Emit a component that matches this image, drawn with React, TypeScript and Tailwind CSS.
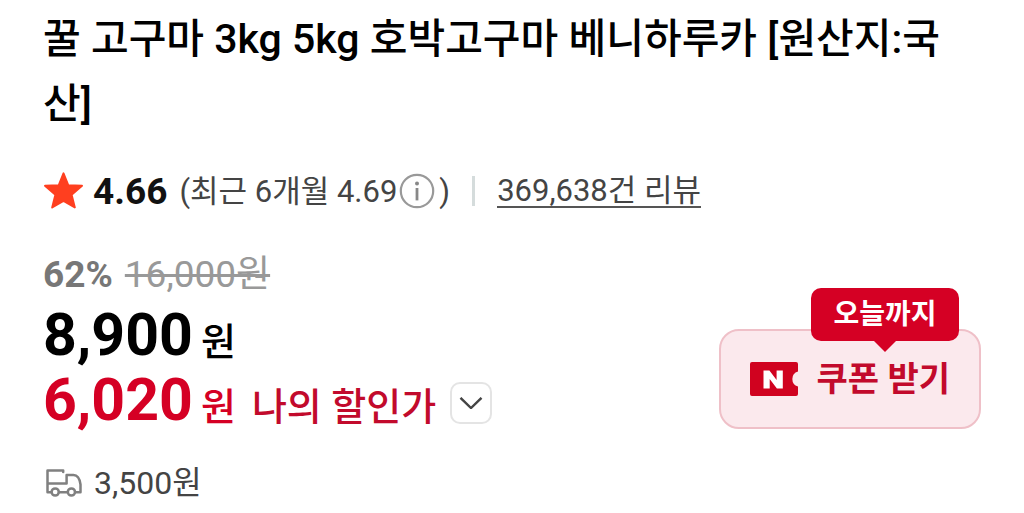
import React from "react";

function StarIcon() {
  return (
    <svg className="h-10 w-10 shrink-0" viewBox="0 0 40 40" aria-hidden="true">
      <path
        d="M20.5 2.4 L25.2 14.2 L39 14.8 L28.6 23.8 L31.8 36.4 L20.5 29.8 L9.2 36.4 L12.4 23.8 L2 14.8 L15.8 14.2 Z"
        fill="#ff3f1f"
        stroke="#ff3f1f"
        strokeWidth="2"
        strokeLinejoin="round"
      />
    </svg>
  );
}

function InfoIcon() {
  return (
    <svg className="h-9 w-9" viewBox="0 0 36 36" fill="none" aria-hidden="true">
      <circle cx="18" cy="18" r="16.2" stroke="#999" strokeWidth="2.2" />
      <circle cx="18" cy="10.6" r="2" fill="#888" />
      <path d="M18 15V27.4" stroke="#888" strokeWidth="2.8" />
    </svg>
  );
}

function TruckIcon() {
  return (
    <svg
      className="h-7 w-9 shrink-0"
      viewBox="0 0 36 28"
      fill="none"
      stroke="#808080"
      strokeWidth="2.5"
      strokeLinecap="round"
      strokeLinejoin="round"
      aria-hidden="true"
    >
      <path d="M17.2 3V1.5H1.5V23.2H5.4M13 23.2H21.6M29.2 23.2H34.5V15.5Q33.2 6 27.5 6H20.6V14.4H1.5" />
      <circle cx="9.2" cy="23" r="3.6" />
      <circle cx="25.4" cy="23" r="3.6" />
    </svg>
  );
}

function CouponIcon() {
  return (
    <svg className="h-[34px] w-12 shrink-0" viewBox="0 0 48 34" aria-hidden="true">
      <path
        d="M2 0H46Q48 0 48 2V9.5A7.8 7.8 0 0 0 48 24.5V32Q48 34 46 34H2Q0 34 0 32V2Q0 0 2 0Z"
        fill="#d0021f"
      />
      <path d="M13.5 8.5H19.4L26.6 18V8.5H32.8V26.4H26.9L19.7 16.9V26.4H13.5Z" fill="#fff" />
    </svg>
  );
}

function CouponButton() {
  return (
    <div className="relative mb-2 shrink-0">
      <button
        type="button"
        className="flex h-[100px] items-center gap-[18px] rounded-[20px] border-2 border-[#efc0c8] bg-[#fbe9ed] px-[29px] text-[34px] leading-none font-bold whitespace-nowrap text-[#c20a2c]"
      >
        <CouponIcon />
        쿠폰 받기
      </button>
      <div className="absolute -top-[41px] right-[22px] flex h-[53px] w-[148px] items-center justify-center rounded-[10px] bg-[#d50024] text-[28px] leading-none font-bold whitespace-nowrap text-white">
        오늘까지
        <svg
          className="absolute top-full left-1/2 h-[11px] w-[22px] -translate-x-1/2"
          viewBox="0 0 22 11"
          aria-hidden="true"
        >
          <path d="M0 0H22L11 11Z" fill="#d50024" />
        </svg>
      </div>
    </div>
  );
}

export default function App() {
  return (
    <main className="bg-white px-[43px] pt-[7px] pb-2 font-['Roboto','Noto_Sans_CJK_KR',sans-serif] text-[#444]">
      <h1 className="text-[41px] leading-[65px] font-medium break-all text-black">
        꿀 고구마 3kg 5kg 호박고구마 베니하루카 [원산지:국산]
      </h1>

      <div className="mt-[30px] flex h-12 items-center text-[31px] leading-none whitespace-nowrap">
        <StarIcon />
        <strong className="ml-[10px] text-[37px] font-bold text-[#111]">4.66</strong>
        <span className="ml-3">(최근 6개월 4.69</span>
        <button type="button" aria-label="평점 안내" className="ml-[2px]">
          <InfoIcon />
        </button>
        <span className="ml-1">)</span>
        <span className="mx-[22px] h-[30px] w-[3px] bg-[#d5dcdc]" />
        <a href="#reviews" className="border-b-2 border-[#555]">
          369,638건 리뷰
        </a>
      </div>

      <section className="mt-[35px] flex items-end justify-between">
        <div className="whitespace-nowrap">
          <div className="flex h-12 items-center gap-3 text-[37px] leading-none">
            <strong className="font-bold text-[#777]">62%</strong>
            <del className="text-[#999]">16,000원</del>
          </div>
          <div className="mt-[3px] flex h-[68px] items-baseline gap-2 leading-[68px] text-black">
            <strong className="text-[59px] font-bold">8,900</strong>
            <span className="text-[38px] font-medium">원</span>
          </div>
          <div className="flex h-[68px] items-center text-[#d50024]">
            <div className="flex items-baseline gap-2 leading-[68px]">
              <strong className="text-[59px] font-bold">6,020</strong>
              <span className="text-[38px] font-medium">원</span>
              <span className="ml-2 text-[38px] font-medium text-[#c20a2c]">나의 할인가</span>
            </div>
            <button
              type="button"
              aria-label="할인 내역 보기"
              className="ml-[14px] flex h-[42px] w-[42px] items-center justify-center rounded-[10px] border-2 border-[#e4e4e4] bg-white"
            >
              <svg className="h-3 w-6" viewBox="0 0 24 12" fill="none" aria-hidden="true">
                <path d="M1.5 0.8L12 11L22.5 0.8" stroke="#444" strokeWidth="2.4" />
              </svg>
            </button>
          </div>
        </div>
        <CouponButton />
      </section>

      <div className="mt-6 flex h-11 items-center gap-3 pl-[3px] text-[32px] leading-none">
        <TruckIcon />
        <span>3,500원</span>
      </div>
    </main>
  );
}
